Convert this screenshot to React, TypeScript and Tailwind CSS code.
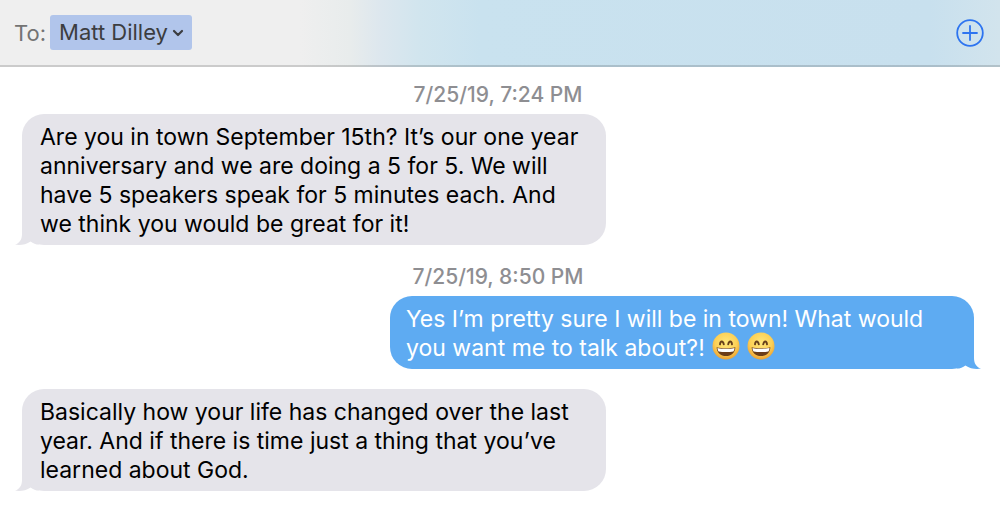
import { useState } from "react";
import clsx from "clsx";

interface Message {
  id: number;
  time?: string;
  mine?: boolean;
  text: string;
  smileys?: number;
}

const contacts = ["Matt Dilley"];

const messages: Message[] = [
  {
    id: 1,
    time: "7/25/19, 7:24 PM",
    text: "Are you in town September 15th? It’s our one year anniversary and we are doing a 5 for 5. We will have 5 speakers speak for 5 minutes each. And we think you would be great for it!",
  },
  {
    id: 2,
    time: "7/25/19, 8:50 PM",
    mine: true,
    text: "Yes I’m pretty sure I will be in town! What would you want me to talk about?!",
    smileys: 2,
  },
  {
    id: 3,
    text: "Basically how your life has changed over the last year. And if there is time just a thing that you’ve learned about God.",
  },
];

function Smiley() {
  return (
    <svg viewBox="0 0 28 28" role="img" aria-label="Grinning face with smiling eyes" className="-my-1 ml-[7px] inline-block size-7 align-baseline">
      <defs>
        <radialGradient id="face" cx="50%" cy="38%" r="62%">
          <stop offset="0" stopColor="#ffe77c" />
          <stop offset="0.65" stopColor="#fdd055" />
          <stop offset="1" stopColor="#eba032" />
        </radialGradient>
      </defs>
      <circle cx="14" cy="14" r="13.5" fill="url(#face)" />
      <path d="M8 12.4C8.4 8.6 11 8.6 11.8 12.4M16.2 12.4C17 8.6 19.6 8.6 20 12.4" fill="none" stroke="#67401b" strokeWidth="1.9" strokeLinecap="round" />
      <path d="M4.6 15.2C10 16.6 18 16.6 23.4 15.2C23.1 21 19.2 24 14 24C8.8 24 4.9 21 4.6 15.2Z" fill="#6b3d18" />
      <path d="M5.5 15.9C10.5 17.1 17.5 17.1 22.5 15.9C22.4 17.6 22 18.6 21.4 19.4C17 20.3 11 20.3 6.6 19.4C6 18.6 5.6 17.6 5.5 15.9Z" fill="#fff" />
    </svg>
  );
}

function Tail({ mine }: { mine?: boolean }) {
  return (
    <svg
      viewBox="0 0 24 24"
      aria-hidden="true"
      className={clsx("absolute bottom-0 size-6", mine ? "-right-[7px] -scale-x-100 text-[#5eabf2]" : "-left-[7px] text-[#e5e4ea]")}
    >
      <path d="M7 0V13C7 18 5 22 0 23.6C5 24.6 11 23.6 15.6 20.4C18 22.3 21 23.4 24 23.6V0Z" fill="currentColor" />
    </svg>
  );
}

function Bubble({ message }: { message: Message }) {
  const { mine, text, smileys = 0 } = message;
  return (
    <div
      className={clsx(
        "relative w-full max-w-[584px] rounded-[22px] pt-[9px] pr-[18px] pb-[6px]",
        mine ? "self-end bg-[#5eabf2] pl-4 text-white" : "self-start bg-[#e5e4ea] pl-[18px] text-black"
      )}
    >
      <Tail mine={mine} />
      <p className="relative text-[23px] leading-[29px]">
        {text}
        {Array.from({ length: smileys }, (_, i) => (
          <Smiley key={i} />
        ))}
      </p>
    </div>
  );
}

export default function App() {
  const [contact, setContact] = useState(contacts[0]);

  return (
    <div className="min-h-screen bg-white font-['Inter',sans-serif]">
      <header className="flex h-[67px] items-center border-b-2 border-black/15 bg-[linear-gradient(90deg,#efefef_0%,#efefef_30%,#e8ecec_35%,#dde7ee_38%,#d1e5ee_42%,#c9e2ef_48%,#c8e0ee_93%,#d2e4ed_100%)] pr-4 pl-[14px]">
        <label htmlFor="contact" className="text-[22px] leading-7 text-[#737373]">
          To:
        </label>
        <div className="relative ml-1">
          <select
            id="contact"
            value={contact}
            onChange={(e) => setContact(e.target.value)}
            className="block h-[35px] appearance-none rounded-[3px] bg-[#b1c5eb] pr-6 pl-[9px] text-[22px] text-[#3c3d40]"
          >
            {contacts.map((name) => (
              <option key={name}>{name}</option>
            ))}
          </select>
          <svg viewBox="0 0 12 8" aria-hidden="true" className="pointer-events-none absolute top-[14px] right-2 h-2 w-3">
            <path d="M2 2L6 6L10 2" fill="none" stroke="#3c3d40" strokeWidth="2.2" strokeLinecap="round" strokeLinejoin="round" />
          </svg>
        </div>
        <button type="button" aria-label="Add contact" className="ml-auto">
          <svg viewBox="0 0 28 28" className="size-7" fill="none" stroke="#2d74f0" strokeWidth="1.8" strokeLinecap="round">
            <circle cx="14" cy="14" r="12.8" />
            <path d="M14 7V21M7 14H21" />
          </svg>
        </button>
      </header>

      <main className="flex flex-col gap-5 pt-4 pr-[26px] pb-4 pl-[22px]">
        {messages.map((message) => (
          <section key={message.id} className="flex flex-col">
            {message.time && (
              <time className="mb-[7px] text-center text-[21px] leading-6 font-medium text-[#8e8e92]">{message.time}</time>
            )}
            <Bubble message={message} />
          </section>
        ))}
      </main>
    </div>
  );
}
